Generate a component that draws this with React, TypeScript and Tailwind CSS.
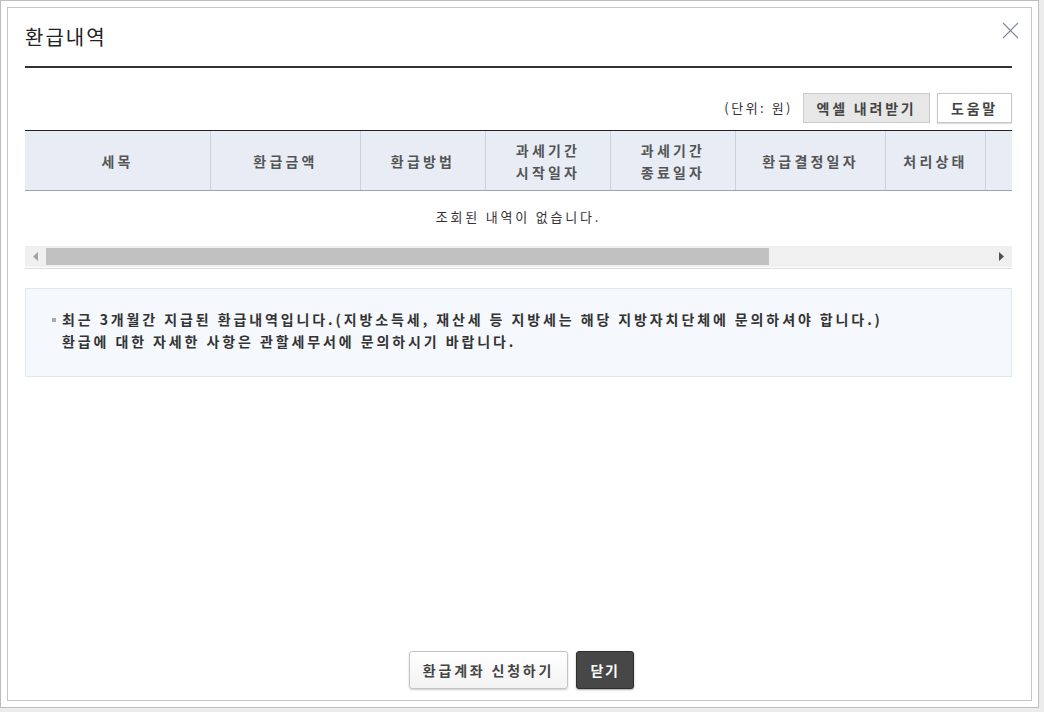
const font = { fontFamily: '"Noto Sans CJK KR", "Noto Sans", sans-serif' };

const columns = [
  { label: ["세목"], w: "w-[186px]" },
  { label: ["환급금액"], w: "w-[150px]" },
  { label: ["환급방법"], w: "w-[125px]" },
  { label: ["과세기간", "시작일자"], w: "w-[125px]" },
  { label: ["과세기간", "종료일자"], w: "w-[125px]" },
  { label: ["환급결정일자"], w: "w-[150px]" },
  { label: ["처리상태"], w: "w-[100px]" },
  { label: [], w: "w-[120px]" },
];

function CloseIcon() {
  return (
    <svg width="17" height="17" viewBox="0 0 17 17" className="block">
      <path d="M1 1L16 16M16 1L1 16" stroke="#7d8598" strokeWidth="1.1" fill="none" />
    </svg>
  );
}

function HScrollbar() {
  return (
    <div className="border-b border-[#dcdcdc] pb-[1px]">
      <div className="flex h-[21px] bg-[#f0f0f0] items-center">
        <div className="w-[21px] h-full flex items-center justify-center">
          <svg width="5" height="9" viewBox="0 0 5 9"><path d="M5 0L0 4.5L5 9Z" fill="#a3a3a3" /></svg>
        </div>
        <div className="w-[723px] h-[17px] bg-[#c1c1c1]" />
        <div className="flex-1" />
        <div className="w-[21px] h-full flex items-center justify-center">
          <svg width="5" height="9" viewBox="0 0 5 9"><path d="M0 0L5 4.5L0 9Z" fill="#505050" /></svg>
        </div>
      </div>
    </div>
  );
}

export default function App() {
  return (
    <div className="w-[1044px] h-[712px] bg-[#ececec]" style={font}>
      <div className="w-[1039px] h-[708px] bg-white border border-[#bdbdbd] p-[6px]">
        <div className="relative h-full border border-[#c6c6c6] pl-[17px] pr-[19px] flex flex-col">
          <button className="absolute right-[12px] top-[14px]">
            <CloseIcon />
          </button>

          <div className="h-[60px] flex items-center border-b-2 border-[#333333] pb-[2px]">
            <h1 className="text-[20px] leading-[24px] text-[#222] tracking-[2px] pt-[2px]">환급내역</h1>
          </div>

          <div className="mt-[25px] flex justify-end items-center">
            <span className="text-[13px] text-[#333] tracking-[2.5px] mr-[10px]">(단위: 원)</span>
            <button className="h-[30px] w-[127px] bg-[#e7e7e7] border border-[#cacaca] text-[14px] font-bold text-[#444] tracking-[2.8px] mr-[7px]">
              엑셀 내려받기
            </button>
            <button className="h-[30px] w-[75px] bg-white border border-[#c6c6c6] shadow-[0_1px_1px_rgba(0,0,0,0.12)] text-[14px] font-bold text-[#444] tracking-[2.8px]">
              도움말
            </button>
          </div>

          <div className="mt-[7px] overflow-hidden">
            <div className="flex w-[1200px] h-[61px] bg-[#e8edf5] border-t border-[#222] border-b border-b-[#9ea4ad]">
              {columns.map((c, i) => (
                <div
                  key={i}
                  className={`${c.w} flex flex-col items-center justify-center border-r border-[#c9d1dc] text-[14px] leading-[22px] font-bold text-[#555] tracking-[3.2px]`}
                >
                  {c.label.map((l) => (
                    <span key={l}>{l}</span>
                  ))}
                </div>
              ))}
            </div>
            <div className="h-[50px] flex items-center justify-center text-[13px] text-[#333] tracking-[2.8px] pt-[1px]">
              조회된 내역이 없습니다.
            </div>
          </div>
          <div className="mt-[5px]">
            <HScrollbar />
          </div>

          <div className="mt-[19px] h-[89px] bg-[#f5f8fc] border border-[#dfe6ef] pl-[26px] pt-[19px]">
            <div className="flex items-start text-[14px] leading-[22px] font-bold text-[#333] tracking-[2.9px]">
              <span className="w-[4px] h-[4px] bg-[#aaaaaa] mt-[10px] mr-[6px] shrink-0" />
              <div>
                <p>최근 3개월간 지급된 환급내역입니다.(지방소득세, 재산세 등 지방세는 해당 지방자치단체에 문의하셔야 합니다.)</p>
                <p>환급에 대한 자세한 사항은 관할세무서에 문의하시기 바랍니다.</p>
              </div>
            </div>
          </div>

          <div className="mt-auto mb-[11px] flex justify-center gap-[8px] pl-[6px]">
            <button className="h-[38px] w-[159px] rounded-[3px] border border-[#c3c3c3] bg-gradient-to-b from-white to-[#f3f3f3] shadow-[0_1px_2px_rgba(0,0,0,0.2)] text-[14px] font-bold text-[#444] tracking-[2.8px]">
              환급계좌 신청하기
            </button>
            <button className="h-[38px] w-[58px] rounded-[3px] border border-[#2e2e2e] bg-[#474747] shadow-[0_1px_2px_rgba(0,0,0,0.35)] text-[14px] font-bold text-white tracking-[1.5px]">
              닫기
            </button>
          </div>
        </div>
      </div>
    </div>
  );
}
